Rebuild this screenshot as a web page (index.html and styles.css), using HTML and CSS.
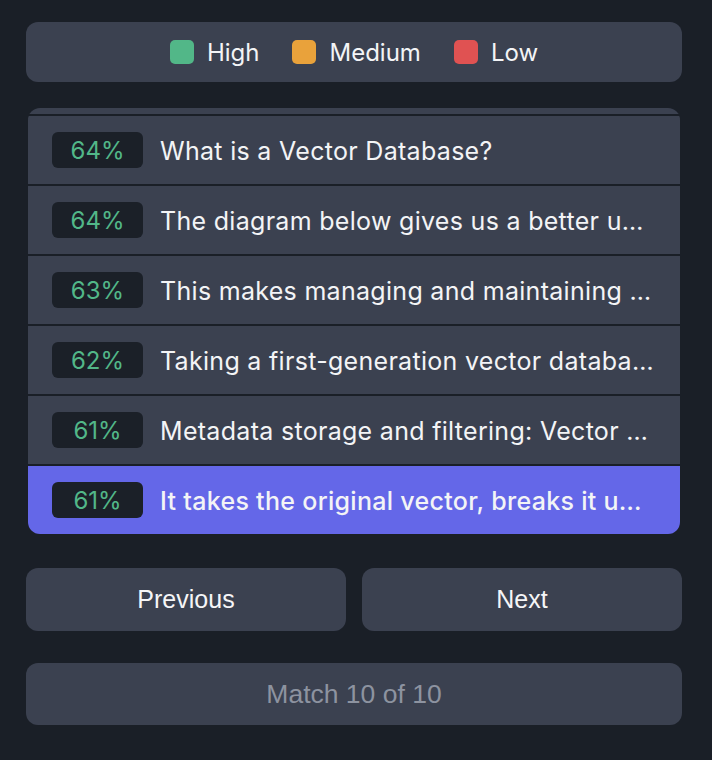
FILE: index.html
```html
<!DOCTYPE html>
<html>
<head>
<meta charset="utf-8">
<link rel="stylesheet" href="styles.css">
</head>
<body>
<div class="page">
  <div class="legend">
    <div class="legend-item"><span class="swatch swatch-high"></span><span>High</span></div>
    <div class="legend-item"><span class="swatch swatch-medium"></span><span>Medium</span></div>
    <div class="legend-item"><span class="swatch swatch-low"></span><span>Low</span></div>
  </div>

  <div class="list">
    <div class="rows">
      <div class="row"><span class="badge">65%</span><span class="row-text">Vector databases are purpose-built to handle</span></div>
      <div class="row"><span class="badge">64%</span><span class="row-text">What is a Vector Database?</span></div>
      <div class="row"><span class="badge">64%</span><span class="row-text">The diagram below gives us a better understanding of the role</span></div>
      <div class="row"><span class="badge">63%</span><span class="row-text">This makes managing and maintaining vector embeddings easy</span></div>
      <div class="row"><span class="badge">62%</span><span class="row-text">Taking a first-generation vector database approach</span></div>
      <div class="row"><span class="badge">61%</span><span class="row-text">Metadata storage and filtering: Vector databases can store</span></div>
      <div class="row row-active"><span class="badge">61%</span><span class="row-text">It takes the original vector, breaks it up into smaller chunks</span></div>
    </div>
  </div>

  <div class="nav">
    <button class="btn">Previous</button>
    <button class="btn">Next</button>
  </div>

  <div class="status">Match 10 of 10</div>
</div>
</body>
</html>
```

FILE: styles.css
```css
* { box-sizing: border-box; }
html, body {
  margin: 0;
  padding: 0;
  background: #1a1f27;
}
body {
  font-family: Inter, "Noto Sans", sans-serif;
  color: #f3f4f6;
}
.page {
  width: 712px;
  height: 760px;
  padding: 22px 30px 0 26px;
  display: flex;
  flex-direction: column;
}
.legend {
  height: 60px;
  background: #3b4150;
  border-radius: 12px;
  display: flex;
  align-items: center;
  justify-content: center;
  gap: 33px;
  font-size: 24px;
}
.legend-item {
  display: flex;
  align-items: center;
  gap: 13px;
}
.swatch {
  width: 24px;
  height: 24px;
  border-radius: 5px;
  display: block;
}
.swatch-high { background: #52b788; }
.swatch-medium { background: #e9a23b; }
.swatch-low { background: #e05252; }

.list {
  margin: 26px 2px 0 2px;
  height: 426px;
  border-radius: 12px;
  overflow: hidden;
  display: flex;
  flex-direction: column;
  justify-content: flex-end;
}
.rows {
  display: flex;
  flex-direction: column;
  gap: 2px;
  flex-shrink: 0;
}
.row {
  height: 68px;
  background: #3b4150;
  display: flex;
  align-items: center;
  gap: 17px;
  padding: 0 25px 0 24px;
  flex-shrink: 0;
}
.row-active {
  background: #6467e8;
}
.badge {
  flex: 0 0 91px;
  height: 36px;
  border-radius: 6px;
  background: #1b2028;
  color: #52b788;
  font-size: 24px;
  display: flex;
  align-items: center;
  justify-content: center;
}
.row-text {
  font-size: 25px;
  letter-spacing: 0.3px;
  white-space: nowrap;
  overflow: hidden;
  text-overflow: ellipsis;
  min-width: 0;
  padding-top: 2px;
}
.row-active .row-text {
  font-weight: 500;
}

.nav {
  margin-top: 34px;
  display: grid;
  grid-template-columns: 1fr 1fr;
  gap: 16px;
}
.btn {
  height: 63px;
  border: none;
  border-radius: 12px;
  background: #3b4150;
  color: #f5f5f7;
  font-family: "Liberation Sans", Arial, sans-serif;
  font-size: 25px;
  cursor: pointer;
}
.status {
  margin-top: 32px;
  height: 62px;
  border-radius: 12px;
  background: #3b4150;
  color: #8d93a0;
  font-family: "Liberation Sans", Arial, sans-serif;
  font-size: 26.5px;
  display: flex;
  align-items: center;
  justify-content: center;
}
```
